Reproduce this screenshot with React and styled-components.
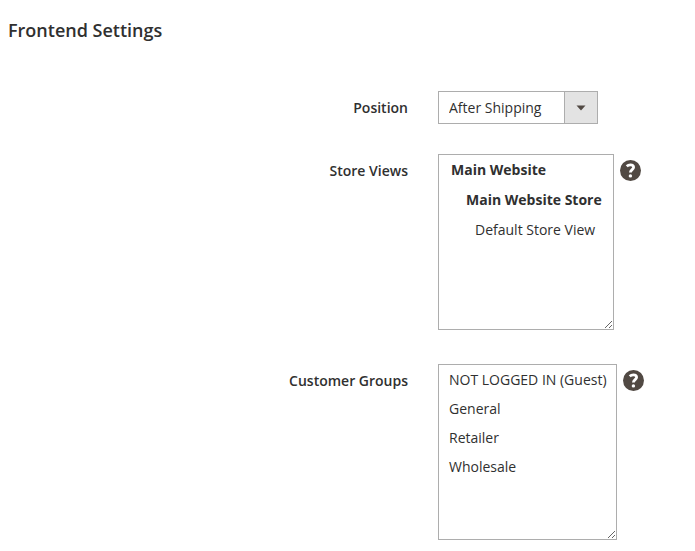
import React, { useState } from "react";

import styled, { createGlobalStyle } from "styled-components";

const GlobalStyle = createGlobalStyle`
  * {
    box-sizing: border-box;
  }

  body {
    margin: 0;
    background-color: #fff;
    color: #303030;
    font-family: "Open Sans", "Helvetica Neue", Helvetica, Arial, sans-serif;
    font-size: 14px;
    line-height: 19px;
  }
`;

const Section = styled.form`
  padding: 18px 8px 10px;
`;

const Title = styled.h2`
  margin: 0 0 49px;
  font-size: 18px;
  font-weight: 600;
  line-height: 24px;
`;

const Field = styled.div`
  display: grid;
  grid-template-columns: 1fr 249px;
  column-gap: 30px;
  align-items: start;
  margin-bottom: ${({ $gap }) => $gap || 0}px;
`;

const Label = styled.label`
  padding-top: 7px;
  font-weight: 600;
  text-align: right;
`;

const Control = styled.div`
  display: flex;
  align-items: flex-start;
`;

const Dropdown = styled.div`
  position: relative;
  display: inline-flex;

  select {
    appearance: none;
    width: 160px;
    height: 33px;
    padding: 0 44px 0 10px;
    border: 1px solid #adadad;
    border-radius: 0;
    background-color: #fff;
    color: inherit;
    font: inherit;
  }

  .arrow {
    position: absolute;
    top: 0;
    right: 0;
    bottom: 0;
    display: flex;
    align-items: center;
    justify-content: center;
    width: 34px;
    border: 1px solid #adadad;
    background-color: #e3e3e3;
    pointer-events: none;
  }
`;

const MultiSelect = styled.select`
  width: ${({ $width }) => $width}px;
  height: 176px;
  padding: 0;
  border: 1px solid #adadad;
  border-radius: 0;
  background-color: #fff;
  color: inherit;
  font: inherit;
  overflow: auto;
  resize: both;
`;

const Option = styled.option`
  min-height: 0;
  padding: 5px 10px;
  color: #303030;
  font-weight: 400;
`;

const OptionGroup = styled.optgroup`
  padding: 5px 0 5px ${({ $indent }) => $indent}px;
  color: #303030;
  font-weight: 700;

  ${Option} {
    padding-top: 10px;
    padding-left: 11px;
  }
`;

const Help = styled.button`
  display: flex;
  margin: 6px 0 0 6px;
  padding: 0;
  border: 0;
  background: none;
  color: #514943;
  cursor: help;
`;

function HelpIcon() {
  return (
    <svg width="21" height="21" viewBox="0 0 21 21" aria-hidden="true">
      <circle cx="10.5" cy="10.5" r="10.5" fill="currentColor" />
      <path
        d="M6.7 6.2C7.8 5.2 9 4.8 10.4 4.8c2.1 0 3.2 0.9 3.2 2.4 0 2.4-3.2 2.5-3.2 5.4"
        fill="none"
        stroke="#fff"
        strokeWidth="2.8"
      />
      <circle cx="10.4" cy="15.9" r="1.7" fill="#fff" />
    </svg>
  );
}

function App() {
  // State
  const [position, setPosition] = useState("after_shipping");

  return (
    <>
      <GlobalStyle />
      <Section>
        <Title>Frontend Settings</Title>

        <Field $gap={30}>
          <Label htmlFor="position">Position</Label>
          <Control>
            <Dropdown>
              <select
                id="position"
                value={position}
                onChange={(e) => setPosition(e.target.value)}
              >
                <option value="after_shipping">After Shipping</option>
              </select>
              <span className="arrow">
                <svg width="10" height="6" viewBox="0 0 10 6" aria-hidden="true">
                  <path d="M0.5 0.5h9L5 5.5z" fill="#514943" />
                </svg>
              </span>
            </Dropdown>
          </Control>
        </Field>

        <Field $gap={34}>
          <Label htmlFor="store-views">Store Views</Label>
          <Control>
            <MultiSelect id="store-views" multiple $width={176}>
              <OptionGroup label="Main Website" $indent={10} />
              <OptionGroup label="Main Website Store" $indent={25}>
                <Option value="1">Default Store View</Option>
              </OptionGroup>
            </MultiSelect>
            <Help type="button" aria-label="Help for Store Views">
              <HelpIcon />
            </Help>
          </Control>
        </Field>

        <Field>
          <Label htmlFor="customer-groups">Customer Groups</Label>
          <Control>
            <MultiSelect id="customer-groups" multiple $width={179}>
              <Option value="0">NOT LOGGED IN (Guest)</Option>
              <Option value="1">General</Option>
              <Option value="2">Retailer</Option>
              <Option value="3">Wholesale</Option>
            </MultiSelect>
            <Help type="button" aria-label="Help for Customer Groups">
              <HelpIcon />
            </Help>
          </Control>
        </Field>
      </Section>
    </>
  );
}

export default App;
